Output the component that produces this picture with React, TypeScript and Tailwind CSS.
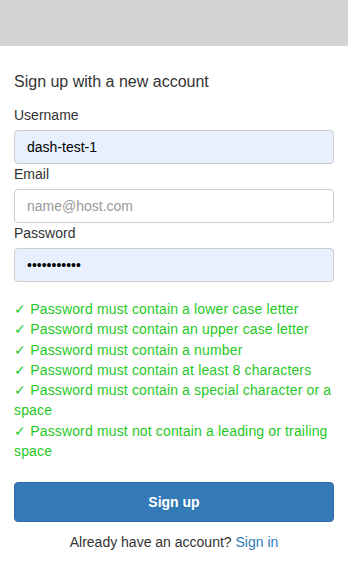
import React from "react";

const rules = [
  "Password must contain a lower case letter",
  "Password must contain an upper case letter",
  "Password must contain a number",
  "Password must contain at least 8 characters",
  "Password must contain a special character or a space",
  "Password must not contain a leading or trailing space",
];

export default function App() {
  return (
    <div className="w-[348px] h-[573px] bg-white text-[#333] text-[14px] leading-[20px]" style={{ fontFamily: '"Liberation Sans", Arial, sans-serif' }}>
      <div className="h-[46px] bg-[#d3d3d3]" />
      <div className="px-[14px] pt-[25px]">
        <div className="text-[16px] leading-[22px] h-[22px]">Sign up with a new account</div>
        <div className="mt-[12px]">Username</div>
        <div className="mt-[5px] h-[34px] rounded-[4px] border border-[#ccc] bg-[#e8f0fe] px-[12px] flex items-center text-black">dash-test-1</div>
        <div>Email</div>
        <div className="mt-[5px] h-[34px] rounded-[4px] border border-[#ccc] bg-white px-[12px] flex items-center text-[#999]">name@host.com</div>
        <div>Password</div>
        <div className="mt-[5px] h-[34px] rounded-[4px] border border-[#ccc] bg-[#e8f0fe] px-[12px] flex items-center text-black text-[14px]">•••••••••••</div>
        <div className="mt-[17px] text-[#1fc91f] text-[14px] leading-[20.3px] tracking-[0.15px]">
          {rules.map((r) => (
            <div key={r}>✓ {r}</div>
          ))}
        </div>
        <button className="mt-[21px] w-full h-[40px] rounded-[4px] bg-[#337ab7] border border-[#2e6da4] text-white font-bold text-[14px]">Sign up</button>
        <div className="mt-[10px] text-center">
          Already have an account? <span className="text-[#337ab7]">Sign in</span>
        </div>
      </div>
    </div>
  );
}
